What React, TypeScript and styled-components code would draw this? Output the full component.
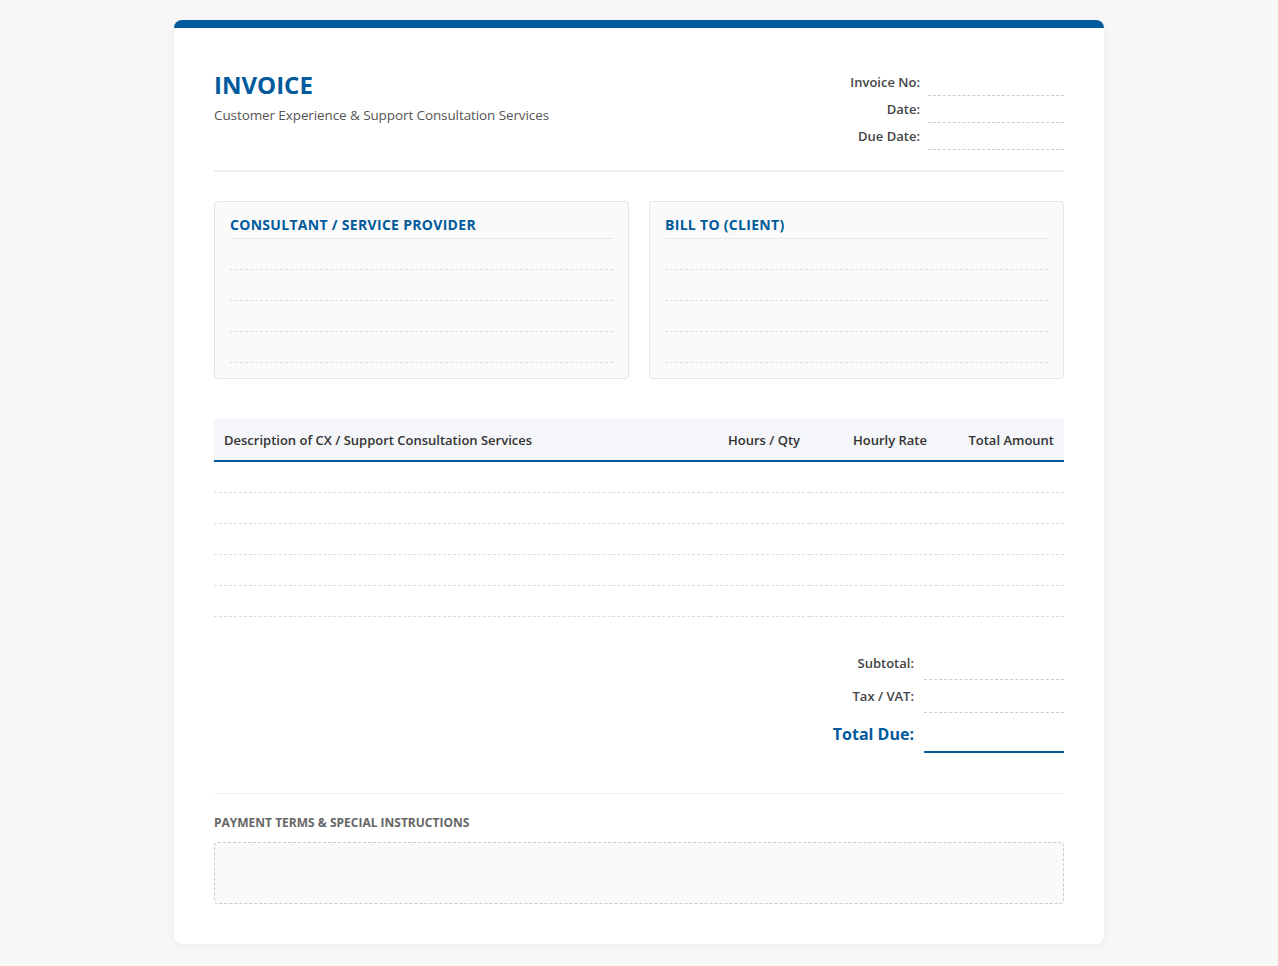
import React from "react";
import styled, { createGlobalStyle } from "styled-components";

const Global = createGlobalStyle`
  body { margin: 0; background: #f7f7f7; font-family: "Open Sans", "Noto Sans", sans-serif; color: #333; }
`;
const Page = styled.div`padding: 20px 0 20px; display: flex; justify-content: center;`;
const Card = styled.div`
  width: 930px; box-sizing: border-box; background: #fff; border-top: 8px solid #005a9c;
  border-radius: 8px; padding: 40px 40px 40px; box-shadow: 0 2px 10px rgba(0,0,0,0.05);
`;
const Header = styled.div`display: flex; justify-content: space-between; padding-bottom: 20px; border-bottom: 2px solid #eee;`;
const Title = styled.h1`margin: 0; font-size: 24px; font-weight: 700; color: #005a9c; line-height: 34px;`;
const Subtitle = styled.div`font-size: 13.5px; color: #555; margin-top: 4px; letter-spacing: -0.1px;`;
const Meta = styled.div`display: grid; grid-template-columns: auto 136px; column-gap: 8px; margin-top: 1px;`;
const MetaLabel = styled.div`font-size: 13px; font-weight: 600; color: #444; text-align: right; line-height: 27px;`;
const Field = styled.div<{ $strong?: boolean }>`
  border-bottom: ${p => (p.$strong ? "2px solid #005a9c" : "1px dashed #ccc")};
`;
const Parties = styled.div`display: grid; grid-template-columns: 1fr 1fr; gap: 20px; margin-top: 29px;`;
const Box = styled.div`border: 1px solid #e5e5e5; border-radius: 4px; background: #fafafa; padding: 13px 15px 15px;`;
const BoxTitle = styled.div`
  font-size: 14px; font-weight: 700; color: #005a9c; letter-spacing: 0.3px; text-transform: uppercase;
  padding-bottom: 4px; border-bottom: 1px solid #e8e8e8;
`;
const Line = styled.div`height: 30px; border-bottom: 1px dashed #ddd;`;
const Table = styled.table`width: 100%; border-collapse: collapse; margin-top: 40px;`;
const Th = styled.th<{ $right?: boolean }>`
  background: #f4f6f9; font-size: 13px; font-weight: 600; color: #333; text-align: ${p => (p.$right ? "right" : "left")};
  padding: 0 10px; height: 42px; box-sizing: border-box; vertical-align: middle; border-bottom: 2px solid #005a9c;
`;
const Td = styled.td`height: 30px; border-bottom: 1px dashed #ddd; padding: 0;`;
const Totals = styled.div`display: grid; grid-template-columns: auto 140px; column-gap: 10px; justify-content: end; margin-top: 30px;`;
const TotLabel = styled.div<{ $big?: boolean }>`
  text-align: right; font-size: ${p => (p.$big ? "16px" : "13px")}; font-weight: ${p => (p.$big ? 700 : 600)};
  color: ${p => (p.$big ? "#005a9c" : "#444")}; line-height: ${p => (p.$big ? "38px" : "33px")};
  padding-top: ${p => (p.$big ? "2px" : "0")};
`;
const Footer = styled.div`margin-top: 40px; border-top: 1px solid #eee; padding-top: 20px;`;
const FootTitle = styled.div`font-size: 12px; font-weight: 700; color: #666; text-transform: uppercase; line-height: 18px;`;
const Notes = styled.div`margin-top: 10px; height: 62px; box-sizing: border-box; border: 1px dashed #ccc; border-radius: 4px; background: #fafafa;`;

const Party = ({ title }: { title: string }) => (
  <Box>
    <BoxTitle>{title}</BoxTitle>
    {[0, 1, 2, 3].map(i => <Line key={i} />)}
  </Box>
);

export default function App() {
  return (
    <Page>
      <Global />
      <Card>
        <Header>
          <div>
            <Title>INVOICE</Title>
            <Subtitle>Customer Experience &amp; Support Consultation Services</Subtitle>
          </div>
          <Meta>
            <MetaLabel>Invoice No:</MetaLabel><Field />
            <MetaLabel>Date:</MetaLabel><Field />
            <MetaLabel>Due Date:</MetaLabel><Field />
          </Meta>
        </Header>
        <Parties>
          <Party title="Consultant / Service Provider" />
          <Party title="Bill To (Client)" />
        </Parties>
        <Table>
          <thead>
            <tr>
              <Th>Description of CX / Support Consultation Services</Th>
              <Th $right style={{ width: 100 }}>Hours / Qty</Th>
              <Th $right style={{ width: 127 }}>Hourly Rate</Th>
              <Th $right style={{ width: 127 }}>Total Amount</Th>
            </tr>
          </thead>
          <tbody>
            {[0, 1, 2, 3, 4].map(i => (
              <tr key={i}><Td /><Td /><Td /><Td /></tr>
            ))}
          </tbody>
        </Table>
        <Totals>
          <TotLabel>Subtotal:</TotLabel><Field />
          <TotLabel>Tax / VAT:</TotLabel><Field />
          <TotLabel $big>Total Due:</TotLabel><Field $strong />
        </Totals>
        <Footer>
          <FootTitle>Payment Terms &amp; Special Instructions</FootTitle>
          <Notes />
        </Footer>
      </Card>
    </Page>
  );
}
